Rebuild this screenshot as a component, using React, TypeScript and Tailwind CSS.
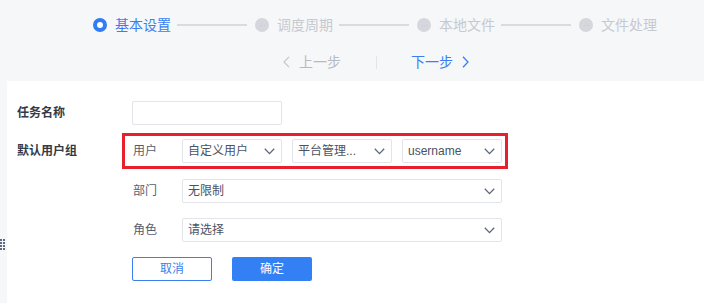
import React from "react";

const steps = ["基本设置", "调度周期", "本地文件", "文件处理"];

function Chevron({ className }: { className?: string }) {
  return (
    <svg width="11" height="7" viewBox="0 0 11 7" className={className} fill="none">
      <path d="M0.8 0.8L5.5 5.6L10.2 0.8" stroke="currentColor" strokeWidth="1.3" />
    </svg>
  );
}

function Select({ value, width }: { value: string; width: string }) {
  return (
    <div
      className={`${width} h-[24px] shrink-0 bg-white border border-[#e2e4e9] rounded-[2px] flex items-center justify-between pl-[5px] pr-[6px] text-[12px] text-[#4a5264]`}
    >
      <span className="whitespace-nowrap">{value}</span>
      <Chevron className="text-[#5d6679]" />
    </div>
  );
}

function StepDot({ active }: { active: boolean }) {
  if (active) {
    return <div className="w-[14px] h-[14px] rounded-full border-[4px] border-[#2f7cf5] bg-white shrink-0" />;
  }
  return (
    <div className="w-[14px] h-[14px] rounded-full bg-[#d5d7dd] shrink-0 flex items-center justify-center gap-[1px]">
      <span className="w-[1px] h-[1px] bg-[#c9cbd1]" />
      <span className="w-[1px] h-[1px] bg-[#c9cbd1]" />
      <span className="w-[1px] h-[1px] bg-[#c9cbd1]" />
    </div>
  );
}

export default function App() {
  return (
    <div className="w-[704px] h-[303px] overflow-hidden bg-[#f6f7f9] flex flex-col font-[family-name:'Liberation_Sans','Noto_Sans_CJK_SC',sans-serif]">
      {/* steps header */}
      <div className="h-[81px] shrink-0 flex flex-col">
        <div className="h-[50px] flex items-center pl-[93px]">
          {steps.map((s, i) => (
            <div key={s} className="flex items-center">
              <StepDot active={i === 0} />
              <span
                className={`ml-[8px] text-[14px] leading-none whitespace-nowrap ${
                  i === 0 ? "text-[#3a7ef0]" : "text-[#c6c9d0]"
                }`}
              >
                {s}
              </span>
              {i < steps.length - 1 && (
                <div className="ml-[6px] mr-[8px] w-[70px] h-[2px] bg-[#d9dbe0]" />
              )}
            </div>
          ))}
        </div>
        <div className="h-[24px] flex items-center pl-[283px]">
          <svg width="7" height="12" viewBox="0 0 7 12" fill="none" className="text-[#c3c6ce]">
            <path d="M6 0.8L1 6L6 11.2" stroke="currentColor" strokeWidth="1.2" />
          </svg>
          <span className="ml-[9px] text-[14px] leading-none text-[#b6bac3]">上一步</span>
          <div className="ml-[35px] w-px h-[13px] bg-[#e2e4e9]" />
          <span className="ml-[34px] text-[14px] leading-none text-[#3a7ef0]">下一步</span>
          <svg width="7" height="12" viewBox="0 0 7 12" fill="none" className="ml-[9px] text-[#3a7ef0]">
            <path d="M1 0.8L6 6L1 11.2" stroke="currentColor" strokeWidth="1.3" />
          </svg>
        </div>
      </div>

      {/* body */}
      <div className="flex-1 flex">
        <div className="w-[7px] shrink-0 flex flex-col pt-[157px]">
          <svg width="5" height="13" viewBox="0 0 5 13" className="text-[#5f6a82]">
            {[0, 3, 6, 9].map((y) => (
              <g key={y}>
                <rect x="0" y={y + 1} width="2" height="2" fill="currentColor" />
                <rect x="3" y={y + 1} width="2" height="2" fill="currentColor" />
              </g>
            ))}
          </svg>
        </div>
        <div className="flex-1 bg-white pt-[20px] pl-[10px] flex flex-col">
          {/* 任务名称 */}
          <div className="flex items-center h-[24px]">
            <div className="w-[115px] text-[12px] font-bold text-[#333a46]">任务名称</div>
            <div className="w-[150px] h-[24px] border border-[#e2e4e9] rounded-[2px] bg-white" />
          </div>

          {/* 默认用户组 */}
          <div className="flex items-center mt-[8px]">
            <div className="w-[105px] text-[12px] font-bold text-[#333a46]">默认用户组</div>
            <div className="w-[386px] h-[36px] border-[3px] border-[#e6212d] flex items-center pl-[8px]">
              <div className="w-[49px] text-[12px] text-[#565e70]">用户</div>
              <div className="flex items-center gap-[10px]">
                <Select value="自定义用户" width="w-[100px]" />
                <Select value="平台管理..." width="w-[100px]" />
                <Select value="username" width="w-[100px]" />
              </div>
            </div>
          </div>

          {/* 部门 */}
          <div className="flex items-center mt-[10px] pl-[115px]">
            <div className="w-[50px] pl-[1px] text-[12px] text-[#565e70]">部门</div>
            <Select value="无限制" width="w-[320px]" />
          </div>

          {/* 角色 */}
          <div className="flex items-center mt-[15px] pl-[115px]">
            <div className="w-[50px] pl-[1px] text-[12px] text-[#565e70]">角色</div>
            <Select value="请选择" width="w-[320px]" />
          </div>

          {/* buttons */}
          <div className="flex items-center mt-[15px] pl-[115px] gap-[20px]">
            <button className="w-[80px] h-[24px] border border-[#3a7ef0] rounded-[2px] bg-white text-[12px] text-[#3a7ef0]">
              取消
            </button>
            <button className="w-[80px] h-[24px] rounded-[2px] bg-[#3380f4] text-[12px] text-white">
              确定
            </button>
          </div>
        </div>
      </div>
    </div>
  );
}
